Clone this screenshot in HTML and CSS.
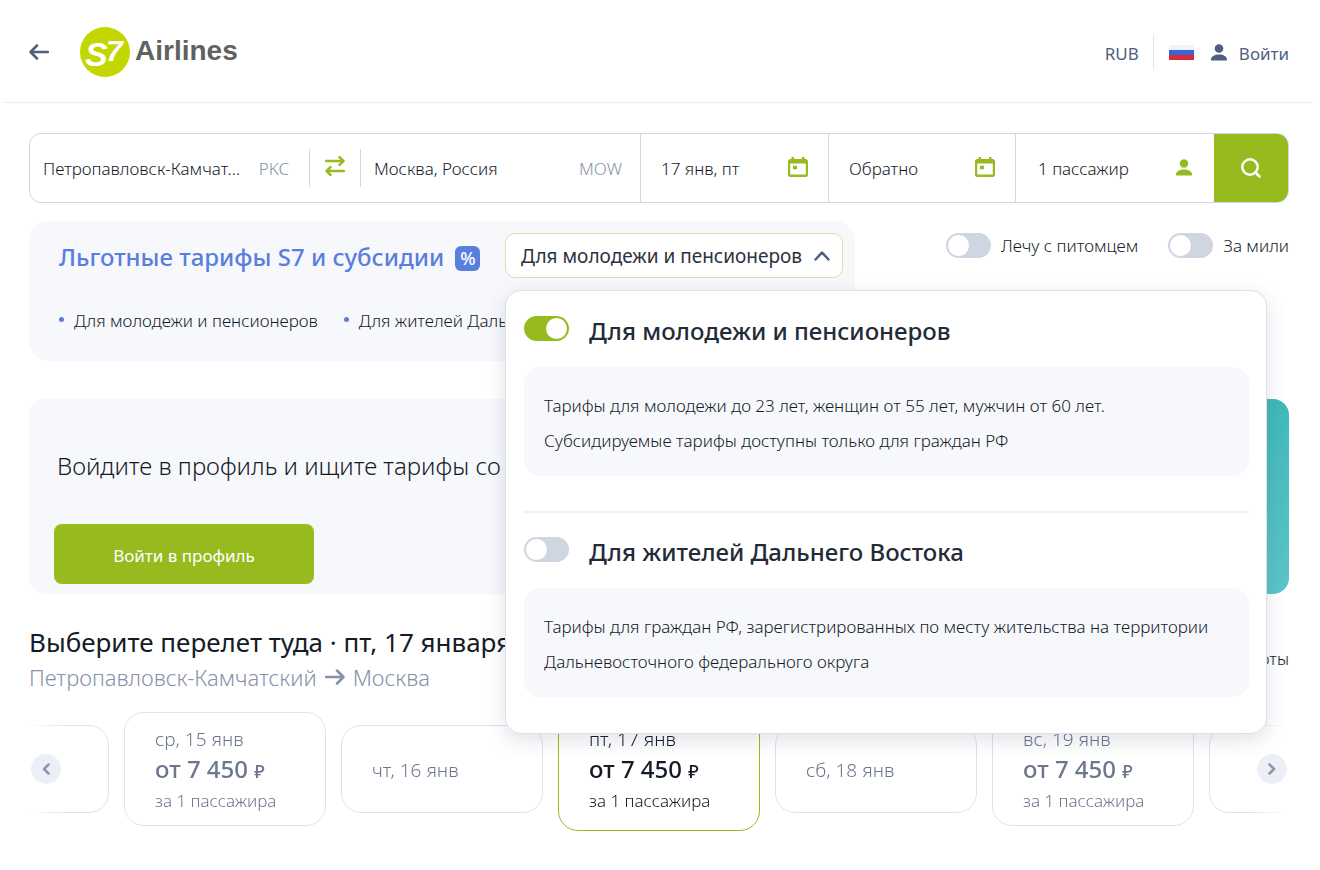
FILE: index.html
```html
<!DOCTYPE html>
<html lang="ru">
<head>
<meta charset="utf-8">
<title>S7 Airlines</title>
<link rel="stylesheet" href="styles.css">
</head>
<body>
<svg class="sprite" aria-hidden="true">
  <symbol id="calendar" viewBox="0 0 20 20">
    <path fill="currentColor" fill-rule="evenodd" d="M3.500 0h2.500v2h8V0h2.500v2h1a2.500 2.500 0 0 1 2.500 2.500v13a2.500 2.500 0 0 1-2.500 2.500h-15A2.500 2.500 0 0 1 0 17.500v-13A2.500 2.500 0 0 1 2.500 2h1zM2.200 6.500v11h15.600v-11zM5 8.700h4v3.600H5z"/>
  </symbol>
  <symbol id="person" viewBox="0 0 16 17">
    <circle cx="8" cy="4.500" r="4.300" fill="currentColor"/>
    <path fill="currentColor" d="M0 15.500C0 12.500 3.500 10.500 8 10.500s8 2 8 5v.5q0 .5-.5.5H.5q-.5 0-.5-.5z"/>
  </symbol>
</svg>

<header class="header">
  <a class="back" href="#" aria-label="Назад">
    <svg width="20" height="16" viewBox="0 0 20 16"><path d="M19 8H2M8 1.500 1.500 8 8 14.500" class="line"/></svg>
  </a>
  <a class="logo" href="#">
    <svg width="50" height="50" viewBox="0 0 50 50" aria-hidden="true">
      <circle cx="25" cy="25" r="25" fill="#c4d600"/>
      <text class="logo-mark" x="5" y="39" font-size="34">S</text>
      <text class="logo-mark" x="26" y="34" font-size="30">7</text>
    </svg>
    <span>Airlines</span>
  </a>
  <nav class="tools">
    <button class="tool currency" type="button">RUB</button>
    <button class="tool flag" type="button" aria-label="Русский">
      <svg width="25" height="15" viewBox="0 0 25 15"><path fill="#f2f3f8" d="M0 0h25v5H0z"/><path fill="#3766d8" d="M0 5h25v5H0z"/><path fill="#d62b33" d="M0 10h25v5H0z"/></svg>
    </button>
    <button class="tool login" type="button"><svg width="16" height="17"><use href="#person"/></svg><span>Войти</span></button>
  </nav>
</header>

<main class="page">
  <form class="search">
    <label class="field field-from"><input type="text" aria-label="Откуда" value="Петропавловск-Камчат..."><span class="code">PKC</span></label>
    <button class="swap" type="button" aria-label="Поменять местами">
      <svg width="20" height="20" viewBox="0 0 20 20"><path class="line" d="M1 5h17M14.500 1.200 18.500 5l-4 3.800M19 15H2M5.500 11.200 1.500 15l4 3.800"/></svg>
    </button>
    <label class="field field-to"><input type="text" aria-label="Куда" value="Москва, Россия"><span class="code">MOW</span></label>
    <label class="field field-date"><input type="text" aria-label="Туда" value="17 янв, пт"><svg width="20" height="20"><use href="#calendar"/></svg></label>
    <label class="field field-date"><input type="text" aria-label="Обратно" value="Обратно"><svg width="20" height="20"><use href="#calendar"/></svg></label>
    <label class="field field-people"><input type="text" aria-label="Пассажиры" value="1 пассажир"><svg width="16" height="17"><use href="#person"/></svg></label>
    <button class="submit" type="submit" aria-label="Найти">
      <svg width="20" height="20" viewBox="0 0 20 20"><circle cx="9" cy="9" r="7.700" class="line"/><path class="line" d="m14.500 14.500 4 4"/></svg>
    </button>
  </form>

  <div class="options">
    <section class="fares">
      <div class="fares-top">
        <h2 class="fares-title">Льготные тарифы S7 и субсидии <span class="percent">%</span></h2>
        <div class="dropdown">
          <button class="dropdown-button" type="button" aria-expanded="true">Для молодежи и пенсионеров
            <svg width="16" height="10" viewBox="0 0 16 10"><path class="line" d="m1.500 8.500 6.500-7 6.500 7"/></svg>
          </button>
          <div class="popover">
            <label class="option"><input class="switch" type="checkbox" checked><span>Для молодежи и пенсионеров</span></label>
            <p class="note">Тарифы для молодежи до 23 лет, женщин от 55 лет, мужчин от 60 лет.<br>Субсидируемые тарифы доступны только для граждан РФ</p>
            <hr class="rule">
            <label class="option"><input class="switch" type="checkbox"><span>Для жителей Дальнего Востока</span></label>
            <p class="note">Тарифы для граждан РФ, зарегистрированных по месту жительства на территории Дальневосточного федерального округа</p>
          </div>
        </div>
      </div>
      <ul class="fares-list">
        <li>Для молодежи и пенсионеров</li>
        <li>Для жителей Дальнего Востока</li>
      </ul>
    </section>
    <div class="toggles">
      <label class="toggle"><input class="switch" type="checkbox"><span>Лечу с питомцем</span></label>
      <label class="toggle"><input class="switch" type="checkbox"><span>За мили</span></label>
    </div>
  </div>

  <section class="banner">
    <div class="banner-body">
      <p class="banner-text">Войдите в профиль и ищите тарифы со скидкой</p>
      <button class="banner-button" type="button">Войти в профиль</button>
    </div>
    <div class="banner-art"></div>
  </section>

  <section class="flights">
    <div class="flights-head">
      <div>
        <h1 class="flights-title">Выберите перелет туда · пт, 17 января</h1>
        <p class="route">Петропавловск-Камчатский <svg width="20" height="16" viewBox="0 0 20 16"><path class="line" d="M1 8h17M12 1.500 18.500 8 12 14.500"/></svg> Москва</p>
      </div>
      <a class="benefits" href="#">Льготы</a>
    </div>
    <div class="calendar">
      <div class="days">
        <button class="day" type="button" aria-label="14 янв"></button>
        <button class="day priced" type="button"><span>ср, 15 янв</span><strong>от 7 450 <small>₽</small></strong><span class="per">за 1 пассажира</span></button>
        <button class="day" type="button"><span>чт, 16 янв</span></button>
        <button class="day priced current" type="button"><span>пт, 17 янв</span><strong>от 7 450 <small>₽</small></strong><span class="per">за 1 пассажира</span></button>
        <button class="day" type="button"><span>сб, 18 янв</span></button>
        <button class="day priced" type="button"><span>вс, 19 янв</span><strong>от 7 450 <small>₽</small></strong><span class="per">за 1 пассажира</span></button>
        <button class="day" type="button" aria-label="20 янв"></button>
      </div>
      <button class="arrow arrow-prev" type="button" aria-label="Раньше"><svg width="8" height="12" viewBox="0 0 8 12"><path class="line" d="M6.500 1.500 2 6l4.500 4.500"/></svg></button>
      <button class="arrow arrow-next" type="button" aria-label="Позже"><svg width="8" height="12" viewBox="0 0 8 12"><path class="line" d="M1.500 1.500 6 6l-4.500 4.500"/></svg></button>
    </div>
  </section>
</main>
</body>
</html>
```
FILE: styles.css
```css
:root {
  --green: #97ba1e;
  --ink: #141b28;
  --slate: #4f5f7f;
  --muted: #8691ab;
  --line: #cfd6e4;
  --soft: #f7f8fc;
}

* { box-sizing: border-box; }

body {
  margin: 0;
  background: #fff;
  color: var(--ink);
  font: 300 17px/24px "Noto Sans", "Open Sans", sans-serif;
}

h1, h2, p, ul { margin: 0; padding: 0; }
button, input { font: inherit; color: inherit; }
button { border: 0; padding: 0; background: none; cursor: pointer; }
a { color: inherit; text-decoration: none; }
svg { display: block; flex: none; }
.sprite { position: absolute; width: 0; height: 0; }

.line {
  fill: none;
  stroke: currentColor;
  stroke-width: 2.500;
  stroke-linecap: round;
  stroke-linejoin: round;
}

.header {
  display: flex;
  align-items: center;
  margin: 0 7px 0 4px;
  padding: 27px 24px 25px 25px;
  border-bottom: 1px solid #e9ecf4;
}
.back { color: var(--slate); margin-right: 31px; }
.logo {
  display: flex;
  align-items: center;
  gap: 5px;
  color: #5f6262;
  font: bold 28px/44px "Liberation Sans", Arial, sans-serif;
}
.logo span { padding-bottom: 2px; }
.logo-mark { fill: #fff; font-family: "Liberation Sans", Arial, sans-serif; font-weight: bold; font-style: italic; }
.tools { display: flex; align-items: center; margin-left: auto; color: var(--slate); font-weight: 400; }
.tool { display: flex; align-items: center; gap: 12px; height: 34px; }
.tool span, .currency { padding-top: 3px; }
.currency { padding-right: 14px; border-right: 1px solid #dde2ec; }
.flag { margin: 0 17px 0 15px; }

.page { padding: 30px 31px 38px 29px; }

.search {
  display: grid;
  grid-template-columns: 279fr 52px 280fr 188fr 187fr 198fr 74px;
  height: 70px;
  border: 1px solid var(--line);
  border-radius: 12px;
  overflow: hidden;
}
.field { display: flex; align-items: center; min-width: 0; padding: 0 20px; color: var(--green); border-right: 1px solid var(--line); }
.field input { flex: 1; min-width: 0; padding: 2px 0 0; border: 0; outline: 0; background: none; color: var(--ink); }
.field svg { margin-bottom: 2px; }
.field-from { padding: 0 20px 0 13px; border: 0; }
.field-to { padding: 0 18px 0 13px; }
.field-people { padding: 0 22px; border: 0; }
.code { padding-top: 2px; color: var(--muted); }
.swap {
  display: flex;
  align-items: center;
  justify-content: center;
  align-self: center;
  height: 38px;
  padding-bottom: 4px;
  color: var(--green);
  border: solid var(--line);
  border-width: 0 1px;
}
.submit { display: flex; align-items: center; justify-content: center; background: var(--green); color: #fff; }

.options { display: flex; gap: 91px; margin-top: 18px; }
.fares { flex: 1; height: 140px; padding: 12px 12px 0 30px; border-radius: 20px; background: var(--soft); }
.fares-top { display: flex; align-items: center; justify-content: space-between; }
.fares-title { display: flex; align-items: center; gap: 11px; padding-top: 2px; color: #5a7ede; font-size: 24px; line-height: 32px; font-weight: 500; }
.percent { width: 25px; height: 25px; margin-top: 4px; border-radius: 6px; background: #5a7ede; color: #fff; font-size: 18px; line-height: 25px; text-align: center; }
.dropdown { position: relative; }
.dropdown-button {
  display: flex;
  align-items: center;
  gap: 12px;
  height: 45px;
  padding: 0 12px 0 15px;
  border: 1px solid #d3e3a4;
  border-radius: 10px;
  background: #fff;
  color: #2a3240;
  font-size: 19px;
  font-weight: 400;
  white-space: nowrap;
}
.dropdown-button svg { color: var(--slate); }
.fares-list { display: flex; gap: 26px; margin-top: 31px; list-style: none; }
.fares-list li { display: flex; gap: 10px; white-space: nowrap; }
.fares-list li::before { content: ""; width: 5px; height: 5px; margin-top: 8px; border-radius: 50%; background: #5a7ede; }

.popover {
  position: absolute;
  z-index: 2;
  top: 57px;
  left: 0;
  width: 762px;
  padding: 22px 17px 36px 18px;
  border: 1px solid #dbe1ec;
  border-radius: 16px;
  background: #fff;
  box-shadow: 0 6px 20px rgba(60, 75, 105, .16);
}
.option { display: flex; gap: 20px; padding-top: 3px; color: #232b38; font-size: 24px; line-height: 30px; font-weight: 500; }
.note { margin-top: 21px; padding: 21px 20px 18px; border-radius: 16px; background: var(--soft); line-height: 35px; }
.rule { height: 2px; margin: 35px 0 21px; border: 0; background: #edf1f7; }

.switch {
  appearance: none;
  flex: none;
  display: flex;
  width: 45px;
  height: 25px;
  margin: 0;
  padding: 2px;
  border-radius: 13px;
  background: #cfd5e1;
}
.switch::before { content: ""; width: 21px; height: 21px; border-radius: 50%; background: #fff; }
.switch:checked { justify-content: flex-end; background: var(--green); }

.toggles { display: flex; align-items: flex-start; gap: 30px; padding-top: 12px; }
.toggle { display: flex; align-items: center; gap: 10px; white-space: nowrap; }

.banner { display: grid; grid-template-columns: 2fr 1fr; margin-top: 38px; border-radius: 16px; overflow: hidden; background: var(--soft); }
.banner-body { padding: 51px 25px 10px; }
.banner-text { padding-left: 3px; font-size: 24px; line-height: 32px; }
.banner-button { width: 260px; height: 60px; margin-top: 42px; padding-top: 3px; border-radius: 8px; background: var(--green); color: #fff; font-weight: 400; }
.banner-art { background: linear-gradient(165deg, #2fb2b2, #5cc5c9); }

.flights-head { display: flex; justify-content: space-between; align-items: center; margin-top: 30px; }
.flights-title { font-size: 26px; line-height: 36px; font-weight: 400; }
.route { display: flex; align-items: center; gap: 8px; color: var(--muted); font-size: 22px; line-height: 34px; }

.calendar { position: relative; margin-top: 12px; }
.days {
  display: flex;
  align-items: center;
  justify-content: center;
  gap: 15px;
  overflow: hidden;
  mask-image: linear-gradient(90deg, transparent, #000 40px, #000 calc(100% - 40px), transparent);
}
.day {
  flex: none;
  display: flex;
  flex-direction: column;
  justify-content: center;
  width: 202px;
  height: 88px;
  padding: 2px 30px 0;
  border: 1px solid #dde2ee;
  border-radius: 20px;
  color: #6c778f;
  font-size: 19px;
  text-align: left;
}
.priced { height: 114px; }
.current { height: 125px; border-color: var(--green); color: var(--ink); }
.day strong { font-size: 24px; line-height: 36px; font-weight: 500; }
.day small { font-size: 18px; }
.day .per { font-size: 17px; }
.arrow {
  position: absolute;
  top: 50%;
  display: flex;
  align-items: center;
  justify-content: center;
  width: 30px;
  height: 30px;
  margin-top: -15px;
  border-radius: 50%;
  background: #eceff6;
  color: #8d97ab;
}
.arrow-prev { left: 2px; }
.arrow-next { right: 2px; }
```
